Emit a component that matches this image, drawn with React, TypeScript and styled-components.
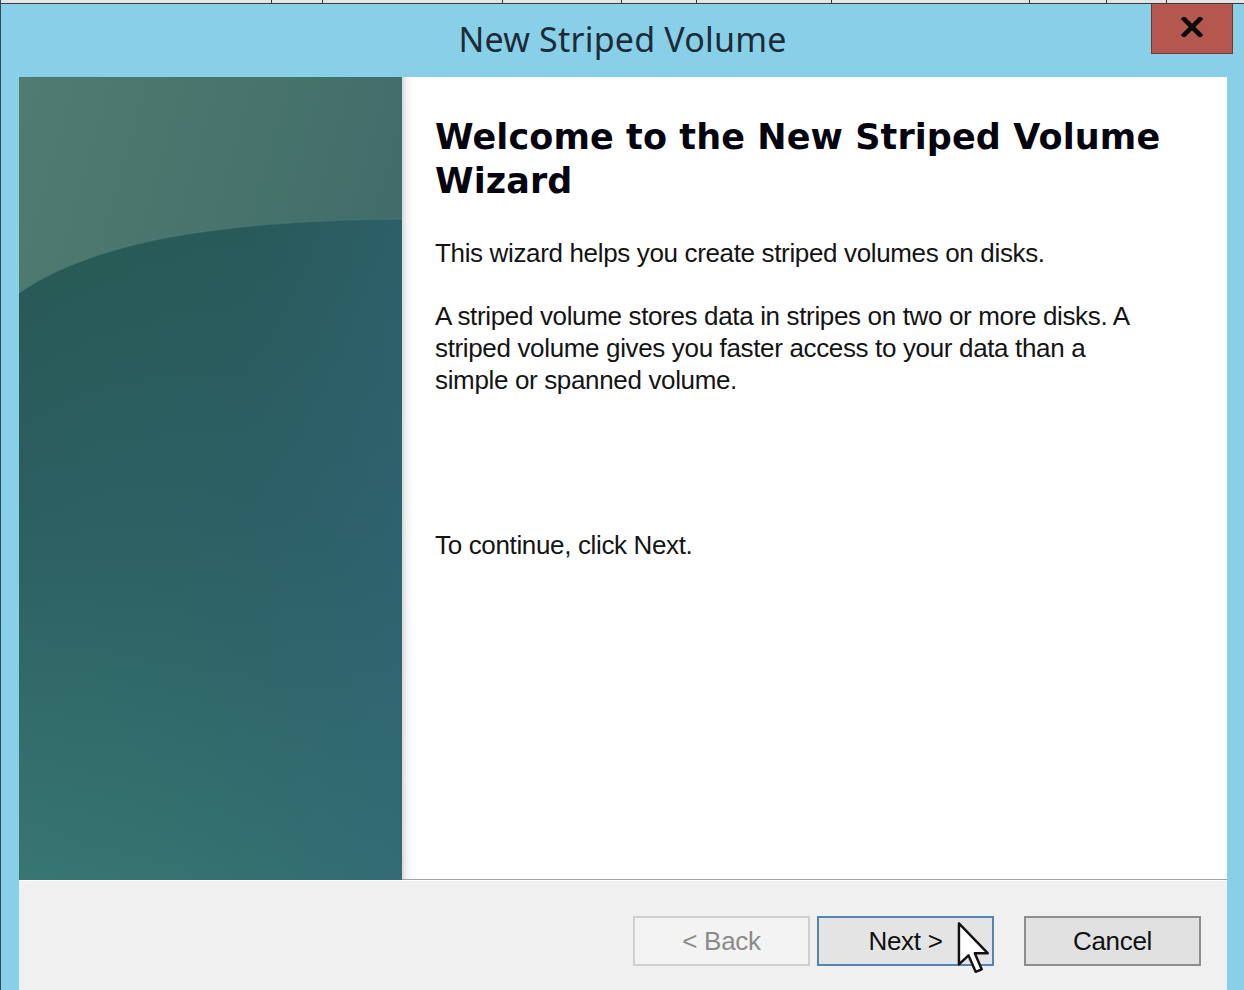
import React from "react";
import styled, { createGlobalStyle } from "styled-components";

const Global = createGlobalStyle`
  html, body { margin: 0; padding: 0; background: #87cfe6; overflow: hidden; }
  #root { width: 1244px; height: 990px; }
`;

const Screen = styled.div`
  width: 1244px;
  height: 990px;
  display: flex;
  flex-direction: column;
  background: #88d0e7;
  border-left: 1px solid #34495a;
  box-sizing: border-box;
  overflow: hidden;
  position: relative;
`;

const BehindStrip = styled.div`
  height: 4px;
  flex: none;
  display: flex;
  background: #e4e4e4;
  border-bottom: 1px solid #3a3a3a;
  box-sizing: border-box;
`;

const StripSeg = styled.div<{ $w: number }>`
  width: ${(p) => p.$w}px;
  flex: none;
  border-right: 1px solid #3a3a3a;
  box-sizing: border-box;
`;

const TitleBar = styled.div`
  height: 73px;
  flex: none;
  display: grid;
  grid-template-columns: 1fr auto 1fr;
`;

const Title = styled.div`
  grid-column: 2;
  align-self: center;
  padding-bottom: 3px;
  font-family: "Noto Sans", "Open Sans", sans-serif;
  font-size: 34px;
  color: #1d2b38;
  letter-spacing: 0.2px;
`;

const CloseButton = styled.div`
  grid-column: 3;
  justify-self: end;
  align-self: start;
  margin-right: 11px;
  width: 82px;
  height: 50px;
  box-sizing: border-box;
  background: #b4584f;
  border: 1px solid #6e3a36;
  border-top: none;
  display: flex;
  align-items: center;
  justify-content: center;
  padding-bottom: 4px;
`;

const Body = styled.div`
  flex: 1;
  margin: 0 17px 0 18px;
  display: flex;
  flex-direction: column;
  min-height: 0;
`;

const Content = styled.div`
  height: 803px;
  flex: none;
  display: flex;
`;

const SidePanel = styled.div`
  width: 383px;
  flex: none;
  position: relative;
  svg { display: block; width: 100%; height: 100%; }
`;

const Page = styled.div`
  flex: 1;
  background: linear-gradient(90deg, #d9d9d9 0, #f3f3f3 5px, #ffffff 12px);
  border-bottom: 1px solid #a2a2a2;
  padding: 38px 40px 0 33px;
  font-family: "Liberation Sans", Arial, sans-serif;
`;

const Heading = styled.h1`
  margin: 0;
  font-family: "DejaVu Sans", Verdana, sans-serif;
  font-weight: bold;
  font-size: 35px;
  line-height: 44px;
  color: #050510;
  letter-spacing: 0.1px;
`;

const Para = styled.p<{ $mt: number }>`
  margin: ${(p) => p.$mt}px 0 0;
  max-width: 712px;
  font-size: 26px;
  line-height: 32px;
  color: #141414;
  letter-spacing: -0.35px;
`;

const Footer = styled.div`
  flex: 1;
  background: #f0f0f0;
  border-top: 1px solid #ffffff;
  display: flex;
  justify-content: flex-end;
  align-items: flex-start;
  padding: 35px 26px 0 0;
  gap: 7px;
`;

const Button = styled.div<{ $variant: "disabled" | "default" | "normal"; $ml?: number }>`
  position: relative;
  width: 177px;
  height: 50px;
  box-sizing: border-box;
  margin-left: ${(p) => p.$ml ?? 0}px;
  display: flex;
  align-items: center;
  justify-content: center;
  font-family: "Liberation Sans", Arial, sans-serif;
  font-size: 26px;
  letter-spacing: -0.3px;
  color: ${(p) => (p.$variant === "disabled" ? "#8b8b8b" : "#111")};
  background: ${(p) =>
    p.$variant === "disabled" ? "#f3f3f3" : p.$variant === "default" ? "#e4e4e4" : "#e1e1e1"};
  border: ${(p) =>
    p.$variant === "disabled"
      ? "2px solid #cfcfcf"
      : p.$variant === "default"
      ? "2px solid #4f86b8"
      : "2px solid #8e8e8e"};
`;

const Cursor = styled.svg`
  position: absolute;
  left: 138px;
  top: 4px;
  width: 34px;
  height: 52px;
  overflow: visible;
`;

const segs = [271, 51, 180, 119, 75, 135, 198, 77, 60];

export default function App() {
  return (
    <>
      <Global />
      <Screen>
        <BehindStrip>
          {segs.map((w, i) => (
            <StripSeg key={i} $w={w} />
          ))}
        </BehindStrip>
        <TitleBar>
          <Title>New Striped Volume</Title>
          <CloseButton>
            <svg width="22" height="20" viewBox="0 0 22 20">
              <path d="M3 2 L19 18 M19 2 L3 18" stroke="#0b0b0b" strokeWidth="4.6" strokeLinecap="square" />
            </svg>
          </CloseButton>
        </TitleBar>
        <Body>
          <Content>
            <SidePanel>
              <svg viewBox="0 0 383 803" preserveAspectRatio="none">
                <defs>
                  <linearGradient id="top" x1="0" y1="0" x2="1" y2="0.6">
                    <stop offset="0" stopColor="#4f7b70" />
                    <stop offset="0.55" stopColor="#46726c" />
                    <stop offset="1" stopColor="#3d676a" />
                  </linearGradient>
                  <linearGradient id="low" x1="0" y1="0" x2="0" y2="1">
                    <stop offset="0" stopColor="#285853" />
                    <stop offset="0.45" stopColor="#2c5f62" />
                    <stop offset="1" stopColor="#387672" />
                  </linearGradient>
                  <linearGradient id="tint" x1="0" y1="0" x2="1" y2="0">
                    <stop offset="0" stopColor="#2a6a60" stopOpacity="0" />
                    <stop offset="0.6" stopColor="#2c6070" stopOpacity="0.25" />
                    <stop offset="1" stopColor="#2f6478" stopOpacity="0.55" />
                  </linearGradient>
                </defs>
                <rect x="0" y="0" width="383" height="803" fill="url(#top)" />
                <path d="M0,216 C80,160 220,143 383,142 L383,803 L0,803 Z" fill="url(#low)" />
                <path d="M0,216 C80,160 220,143 383,142 L383,803 L0,803 Z" fill="url(#tint)" />
                <path d="M0,216 C80,160 220,143 383,142" fill="none" stroke="#5a8a80" strokeOpacity="0.35" strokeWidth="1.5" />
              </svg>
            </SidePanel>
            <Page>
              <Heading>Welcome to the New Striped Volume Wizard</Heading>
              <Para $mt={34}>This wizard helps you create striped volumes on disks.</Para>
              <Para $mt={31}>
                A striped volume stores data in stripes on two or more disks. A striped volume gives you faster access to your data than a simple or spanned volume.
              </Para>
              <Para $mt={133}>To continue, click Next.</Para>
            </Page>
          </Content>
          <Footer>
            <Button $variant="disabled">&lt; Back</Button>
            <Button $variant="default">
              Next &gt;
              <Cursor viewBox="0 0 12 19">
                <path
                  d="M0.5 0.5 L0.5 15.5 L4 12.2 L6.6 18.2 L8.8 17.3 L6.3 11.4 L11 11.4 Z"
                  fill="#ffffff"
                  stroke="#111"
                  strokeWidth="0.9"
                  strokeLinejoin="round"
                />
              </Cursor>
            </Button>
            <Button $variant="normal" $ml={23}>Cancel</Button>
          </Footer>
        </Body>
      </Screen>
    </>
  );
}
